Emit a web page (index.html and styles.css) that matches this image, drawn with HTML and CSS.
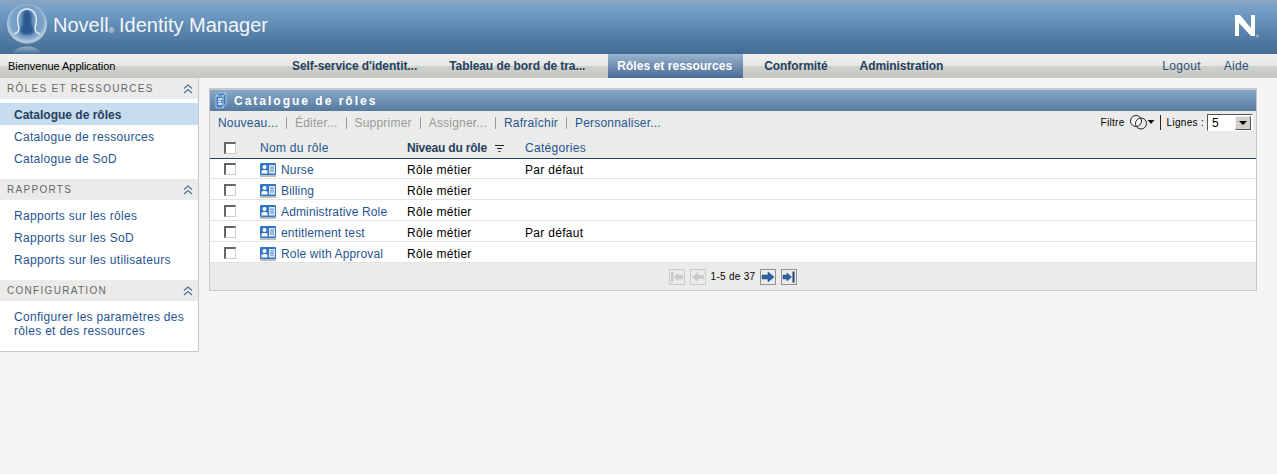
FILE: index.html
```html
<!DOCTYPE html>
<html lang="fr">
<head>
<meta charset="utf-8">
<title>Novell Identity Manager</title>
<link rel="stylesheet" href="styles.css">
</head>
<body>
<svg class="sprites" width="0" height="0" aria-hidden="true">
  <defs>
    <symbol id="role" viewBox="0 0 16 15">
      <rect x="0" y="0" width="16" height="12" rx="1" fill="#2f78c8"/>
      <rect x="0" y="12" width="16" height="2" fill="#b9bdc2"/>
      <circle cx="4.500" cy="4" r="2" fill="#fff"/>
      <path d="M1.500 10.500v-2c0-1 1-1.500 3-1.500s3 .5 3 1.500v2z" fill="#fff"/>
      <rect x="9" y="2" width="6" height="8.500" fill="#dfe8f2"/>
      <path d="M10 4h4M10 6h4M10 8h4" stroke="#5f8fc4" stroke-width="1"/>
    </symbol>
    <symbol id="chev" viewBox="0 0 10 10">
      <path d="M1 4.500 5 1l4 3.500M1 9l4-3.500L9 9" fill="none" stroke="#4d7196" stroke-width="1.200"/>
    </symbol>
  </defs>
</svg>
<header class="banner">
  <svg class="logo" viewBox="0 0 44 53" width="44" height="53" aria-hidden="true">
    <defs>
      <radialGradient id="orb" cx="50%" cy="45%" r="56%">
        <stop offset="0" stop-color="#6b96c2"/>
        <stop offset=".72" stop-color="#7ba2c8"/>
        <stop offset=".9" stop-color="#bcd0e2"/>
        <stop offset="1" stop-color="#5d80a3"/>
      </radialGradient>
      <linearGradient id="mirror" x1="0" y1="0" x2="0" y2="1">
        <stop offset="0" stop-color="#a6bdd3" stop-opacity=".8"/>
        <stop offset="1" stop-color="#a6bdd3" stop-opacity="0"/>
      </linearGradient>
      <filter id="soft" x="-30%" y="-30%" width="160%" height="160%">
        <feGaussianBlur stdDeviation=".9"/>
      </filter>
    </defs>
    <circle cx="22" cy="23" r="20" fill="url(#orb)"/>
    <path d="M22 9c3.500 0 5 4 4.500 9-.4 4 .5 6 2 9 1.500 3 .5 7-6.500 7s-8-4-6.500-7c1.500-3 2.400-5 2-9C17 13 18.500 9 22 9z" fill="#2a5a92" filter="url(#soft)"/>
    <path d="M9 33c4-1.500 6-3 4.500-8C11 16 14 8 22 8s11 8 8.500 17c-1.500 5 .5 6.500 4.500 8" fill="none" stroke="#e6eef5" stroke-width="1.400"/>
    <path d="M7 53c2-5 8-7.500 15-7.500S35 48 37 53z" fill="url(#mirror)"/>
  </svg>
  <div class="brand">Novell<span class="reg">®</span> Identity Manager</div>
  <svg class="n-logo" viewBox="0 0 25 24" width="25" height="24" aria-hidden="true">
    <path d="M1 1h5l11 13V1h4v21h-4L5 9v13H1z" fill="#fff"/>
    <circle cx="23.500" cy="22" r="1" fill="none" stroke="#dfe8f0" stroke-width=".6"/>
  </svg>
</header>
<nav class="menubar">
  <div class="welcome">Bienvenue Application</div>
  <div class="tabs">
    <a class="tab">Self-service d'identit...</a>
    <a class="tab">Tableau de bord de tra...</a>
    <a class="tab tab-active">Rôles et ressources</a>
    <a class="tab">Conformité</a>
    <a class="tab">Administration</a>
  </div>
  <div class="util">
    <a>Logout</a>
    <a>Aide</a>
  </div>
</nav>
<div class="content">
  <aside class="sidebar">
    <section class="group">
      <h2 class="group-head"><span>Rôles et ressources</span><svg class="chev"><use href="#chev"/></svg></h2>
      <ul class="group-list">
        <li class="current"><a>Catalogue de rôles</a></li>
        <li><a>Catalogue de ressources</a></li>
        <li><a>Catalogue de SoD</a></li>
      </ul>
    </section>
    <section class="group">
      <h2 class="group-head"><span>Rapports</span><svg class="chev"><use href="#chev"/></svg></h2>
      <ul class="group-list">
        <li><a>Rapports sur les rôles</a></li>
        <li><a>Rapports sur les SoD</a></li>
        <li><a>Rapports sur les utilisateurs</a></li>
      </ul>
    </section>
    <section class="group group-last">
      <h2 class="group-head"><span>Configuration</span><svg class="chev"><use href="#chev"/></svg></h2>
      <ul class="group-list">
        <li class="multi"><a>Configurer les paramètres des rôles et des ressources</a></li>
      </ul>
    </section>
  </aside>
  <main class="panel">
    <div class="panel-title">
      <svg class="book" viewBox="0 0 12 17" width="12" height="17" aria-hidden="true">
        <path d="M1 4 4 1h7v11l-3 4H1z" fill="#3f7dc0" stroke="#c3d4e6" stroke-width=".8"/>
        <path d="M1 4h7v12M8 4l3-3" fill="none" stroke="#dbe5ef" stroke-width=".8"/>
        <path d="M3 7h4M3 9.500h3M3 12h4" fill="none" stroke="#fff" stroke-width="1.300"/>
      </svg>
      <h1>Catalogue de rôles</h1>
    </div>
    <div class="toolbar">
      <div class="actions">
        <a>Nouveau...</a><i></i>
        <a class="off">Éditer...</a><i></i>
        <a class="off">Supprimer</a><i></i>
        <a class="off">Assigner...</a><i></i>
        <a>Rafraîchir</a><i></i>
        <a>Personnaliser...</a>
      </div>
      <div class="filters">
        <span>Filtre</span>
        <svg class="filter-icon" viewBox="0 0 25 15" width="25" height="15" aria-hidden="true">
          <circle cx="6" cy="6" r="5.500" fill="#fff" stroke="#222"/>
          <circle cx="11" cy="8.500" r="5.500" fill="none" stroke="#222"/>
          <path d="M17.500 5h7L21 9z" fill="#111"/>
        </svg>
        <b class="sep"></b>
        <span>Lignes :</span>
        <div class="select"><span>5</span><b class="select-btn"></b></div>
      </div>
    </div>
    <table class="grid">
      <colgroup>
        <col class="c-check"><col class="c-name"><col class="c-level"><col>
      </colgroup>
      <thead>
        <tr>
          <th><span class="box"></span></th>
          <th><a>Nom du rôle</a></th>
          <th class="sorted"><a>Niveau du rôle</a><svg class="sort" viewBox="0 0 9 7" width="9" height="7" aria-hidden="true"><path d="M0 .5h9M2 3.500h5M3.500 6.500h2" stroke="#222"/></svg></th>
          <th><a>Catégories</a></th>
        </tr>
      </thead>
      <tbody>
        <tr><td><span class="box"></span></td><td><svg class="role"><use href="#role"/></svg><a>Nurse</a></td><td>Rôle métier</td><td>Par défaut</td></tr>
        <tr><td><span class="box"></span></td><td><svg class="role"><use href="#role"/></svg><a>Billing</a></td><td>Rôle métier</td><td></td></tr>
        <tr><td><span class="box"></span></td><td><svg class="role"><use href="#role"/></svg><a>Administrative Role</a></td><td>Rôle métier</td><td></td></tr>
        <tr><td><span class="box"></span></td><td><svg class="role"><use href="#role"/></svg><a>entitlement test</a></td><td>Rôle métier</td><td>Par défaut</td></tr>
        <tr><td><span class="box"></span></td><td><svg class="role"><use href="#role"/></svg><a>Role with Approval</a></td><td>Rôle métier</td><td></td></tr>
      </tbody>
    </table>
    <div class="pager">
      <span class="pg pg-off"><svg viewBox="0 0 14 14" aria-hidden="true"><path d="M1 2h2.500v10H1zM4 7l4-4v2h5v4H8v2z" fill="#c9cbc9"/></svg></span>
      <span class="pg pg-off"><svg viewBox="0 0 14 14" aria-hidden="true"><path d="M1 7l6-5v3h6v4H7v3z" fill="#c9cbc9"/></svg></span>
      <span class="pg-text">1-5 de 37</span>
      <span class="pg"><svg viewBox="0 0 14 14" aria-hidden="true"><path d="M13 7 7 2v3H1v4h6v3z" fill="#2a63a8" stroke="#1d3f6a" stroke-width=".5"/></svg></span>
      <span class="pg"><svg viewBox="0 0 14 14" aria-hidden="true"><path d="M9.500 7 5 3v2H1v4h4v2z" fill="#2a63a8" stroke="#1d3f6a" stroke-width=".5"/><path d="M10.500 1.500h2v11h-2z" fill="#1d3f6a"/></svg></span>
    </div>
  </main>
</div>
</body>
</html>
```
FILE: styles.css
```css
* { box-sizing: border-box; }
html, body { margin: 0; padding: 0; }
body {
  min-height: 474px;
  background: #f5f5f5;
  font-family: "Liberation Sans", Arial, sans-serif;
  font-size: 12px;
  letter-spacing: .3px;
  color: #000;
  overflow: hidden;
}
a { color: #1f5490; text-decoration: none; }
.sprites { position: absolute; }

.banner {
  height: 54px;
  display: flex;
  align-items: flex-start;
  background: linear-gradient(#88a7c4 0, #6f9cc5 22%, #5c86ae 55%, #426b93 100%);
  overflow: hidden;
}
.logo { margin: 1px 0 0 5px; flex: none; }
.brand {
  margin: 12px 0 0 4px;
  font-size: 20px;
  letter-spacing: 0;
  line-height: 26px;
  color: #f2f6fa;
}
.reg { font-size: 8px; margin: 0 -1px 0 0; vertical-align: -1px; }
.n-logo { margin: 14px 18px 0 auto; flex: none; }

.menubar {
  height: 24px;
  display: flex;
  align-items: stretch;
  background: linear-gradient(#eff0ed 0, #e7e8e5 48%, #cfd1cd 52%, #c5c7c3 100%);
  line-height: 25px;
}
.welcome { width: 283px; padding-left: 8px; font-size: 11px; letter-spacing: -.04px; }
.tabs { display: flex; gap: 12px; }
.tab {
  padding: 0 11px 0 9px;
  font-weight: bold;
  letter-spacing: -.07px;
  color: #24405f;
}
.tab-active {
  color: #fff;
  letter-spacing: .05px;
  background: linear-gradient(#9ab4ce, #4b6b98);
}
.util { margin-left: auto; display: flex; gap: 23px; padding-right: 28px; }
.util a { color: #2c4f78; }

.content { display: flex; align-items: flex-start; }
.sidebar {
  width: 199px;
  height: 274px;
  flex: none;
  background: #fff;
  border-right: 1px solid #c6c9cd;
  border-bottom: 1px solid #c6c9cd;
}
.group { height: 101px; }
.group-last { height: 72px; }
.group-head {
  height: 21px;
  margin: 0;
  padding: 0 5px 0 7px;
  display: flex;
  align-items: center;
  justify-content: space-between;
  background: #ebecea;
  font-size: 10px;
  font-weight: normal;
  letter-spacing: 1.300px;
  text-transform: uppercase;
  color: #666;
}
.chev { width: 10px; height: 10px; flex: none; }
.group-list { list-style: none; margin: 4px 0 0; padding: 0; }
.group-list li { height: 22px; padding: 1px 0 0 14px; line-height: 22px; }
.group-list .current { background: #c8dcf0; }
.current a { font-weight: bold; letter-spacing: 0; color: #24405f; }
.group-list .multi { height: auto; padding: 5px 8px 0 14px; line-height: 14px; }

.panel {
  width: 1048px;
  margin: 10px 0 0 10px;
  border: 1px solid #c6c9cd;
  border-top: 2px solid #c6c9cd;
  background: #ebecea;
}
.panel-title {
  height: 21px;
  display: flex;
  align-items: center;
  padding-left: 5px;
  background: linear-gradient(#89a8c7, #55799f);
}
.panel-title h1 {
  margin: 0 0 0 7px;
  font-size: 12px;
  font-weight: bold;
  letter-spacing: 2px;
  color: #fff;
}
.book { flex: none; }
.toolbar {
  height: 23px;
  display: flex;
  align-items: center;
  justify-content: space-between;
  padding: 0 3px 0 8px;
  letter-spacing: .2px;
}
.actions { display: flex; align-items: center; gap: 8px; }
.actions i { width: 1px; height: 12px; background: #999; }
.actions .off { color: #999; }
.filters { display: flex; align-items: center; font-size: 10px; letter-spacing: .3px; }
.filter-icon { margin-left: 5px; }
.sep { width: 1px; height: 15px; margin: 0 6px 0 5px; background: #222; }
.select {
  width: 46px;
  height: 17px;
  margin-left: 3px;
  display: flex;
  align-items: center;
  justify-content: space-between;
  padding: 0 1px 0 4px;
  background: #fff;
  border: 1px solid;
  border-color: #555 #fff #fff #555;
  font-size: 12px;
}
.select-btn {
  width: 16px;
  height: 14px;
  background: #d4d0c8;
  border: 1px solid;
  border-color: #eee #555 #555 #eee;
  position: relative;
}
.select-btn::after {
  content: "";
  position: absolute;
  left: 3px;
  top: 4px;
  border: 4px solid transparent;
  border-top: 4px solid #000;
  border-bottom: 0;
}

.grid { width: 100%; border-collapse: separate; border-spacing: 0; table-layout: fixed; }
.c-check { width: 50px; }
.c-name { width: 147px; }
.c-level { width: 118px; }
.grid th {
  height: 25px;
  padding: 3px 0 0;
  text-align: left;
  font-weight: normal;
  border-bottom: 1px solid #24406a;
}
.grid th:first-child, .grid td:first-child { padding-left: 14px; }
.grid .sorted a { font-weight: bold; letter-spacing: -.2px; color: #24405f; }
.sort { margin-left: 8px; }
.grid td {
  height: 21px;
  padding: 3px 0 0;
  background: #fff;
  border-bottom: 1px solid #e2e3e3;
}
.grid tbody tr:first-child td { height: 20px; padding-top: 2px; }
.grid tbody td:first-child { padding-top: 2px; }
.grid tbody tr:first-child td:first-child { padding-top: 1px; }
.grid td a { letter-spacing: .15px; }
.box {
  display: block;
  width: 12px;
  height: 12px;
  background: #fff;
  border-style: solid;
  border-width: 2px 1px 1px 2px;
  border-color: #666 #ccc #ccc #666;
}
.role { width: 16px; height: 15px; margin: -3px 5px -2px 0; vertical-align: -2px; }
.pager {
  height: 27px;
  display: flex;
  align-items: center;
  justify-content: center;
  gap: 5px;
}
.pg {
  width: 16px;
  height: 16px;
  display: block;
  border: 1px solid #8e9296;
  background: #ebecea;
}
.pg svg { display: block; width: 14px; height: 14px; }
.pg-off { border-color: #c9cbc9; }
.pg-text { font-size: 10px; letter-spacing: .3px; }
```
